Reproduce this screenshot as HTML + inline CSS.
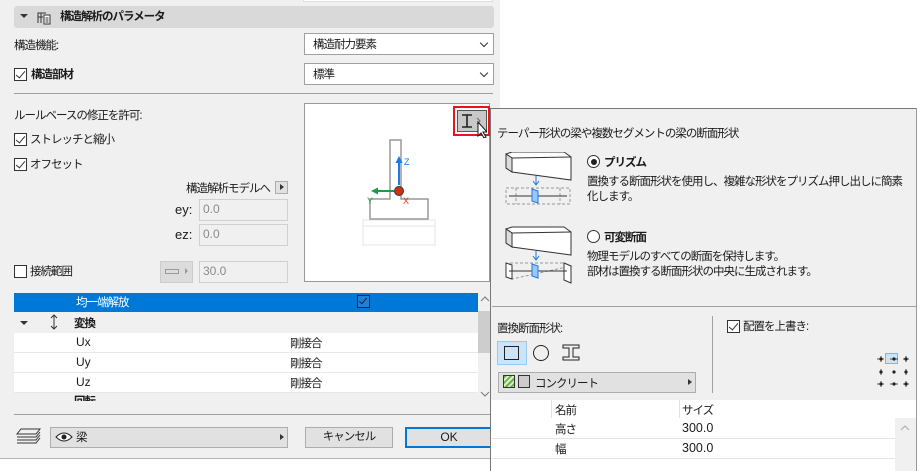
<!DOCTYPE html>
<html><head><meta charset="utf-8"><style>
*{box-sizing:border-box;margin:0;padding:0}
body{width:920px;height:471px;overflow:hidden;background:#fff;font-family:"Liberation Sans","Noto Sans CJK JP",sans-serif;font-size:11.5px;letter-spacing:-1px;color:#1a1a1a;position:relative}
.a{position:absolute;white-space:nowrap}
.l{letter-spacing:0}
.dlg{left:0;top:0;width:500px;height:459px;background:#f0f0f0;border-bottom:1px solid #b4b4b4}
.dd{background:#fff;border:1px solid #a0a0a0;padding:2px 0 0 8px}
.dd:after{content:"";position:absolute;right:6px;top:6px;width:5px;height:5px;border-right:1px solid #333;border-bottom:1px solid #333;transform:rotate(45deg)}
.cb{width:13px;height:13px;border:1px solid #333;background:#fff}
.cb.on:after{content:"";position:absolute;left:3px;top:0px;width:4px;height:8px;border-right:1.5px solid #333;border-bottom:1.5px solid #333;transform:rotate(40deg)}
.inp{background:#f0f0f0;border:1px solid #d0d0d0;color:#8a8a8a;padding:2px 0 0 3px;letter-spacing:0;font-size:12px}
.row{left:14px;width:464px;height:20px;background:#fff;border-bottom:1px solid #e8e8e8}
.btn{background:#e1e1e1;border:1px solid #adadad;text-align:center;line-height:18px}
</style></head><body>
<div class="a dlg"></div>
<div class="a" style="left:303px;top:0;width:190px;height:2px;background:#fff;border:1px solid #ddd;border-top:0"></div>
<div class="a" style="left:14px;top:6px;width:480px;height:22px;background:#d9d9d9;border-radius:3px"></div>
<div class="a" style="left:20px;top:14px;width:0;height:0;border-left:4px solid transparent;border-right:4px solid transparent;border-top:4px solid #333"></div>
<svg class="a" style="left:36px;top:10px" width="16" height="15"><path d="M2 13V3h8M2 7h5M5 3v10" stroke="#333" fill="none"/><rect x="8" y="5" width="6" height="9" fill="#fff" stroke="#333"/><path d="M9.5 8h3M9.5 10h3M9.5 12h3" stroke="#333"/></svg>
<div class="a" style="left:60px;top:8px;font-weight:bold">構造解析のパラメータ</div>
<div class="a" style="left:14px;top:37px">構造機能:</div>
<div class="a dd" style="left:304px;top:33px;width:190px;height:22px">構造耐力要素</div>
<div class="a cb on" style="left:14px;top:68px"></div>
<div class="a" style="left:31px;top:66px;font-weight:bold">構造部材</div>
<div class="a dd" style="left:304px;top:63px;width:190px;height:22px">標準</div>
<div class="a" style="left:14px;top:93px;width:479px;height:1px;background:#a0a0a0"></div>
<div class="a" style="left:14px;top:107px">ルールベースの修正を許可:</div>
<div class="a cb on" style="left:14px;top:133px"></div>
<div class="a" style="left:30px;top:131px">ストレッチと縮小</div>
<div class="a cb on" style="left:14px;top:158px"></div>
<div class="a" style="left:30px;top:156px">オフセット</div>
<div class="a" style="right:650px;top:180px">構造解析モデルへ</div>
<div class="a" style="left:275px;top:181px;width:13px;height:13px;background:#e1e1e1;border:1px solid #adadad"></div>
<div class="a" style="left:280px;top:184px;border-top:3.5px solid transparent;border-bottom:3.5px solid transparent;border-left:4px solid #333"></div>
<div class="a l" style="left:175px;top:202px;font-size:13px">ey:</div>
<div class="a inp" style="left:199px;top:199px;width:89px;height:22px">0.0</div>
<div class="a l" style="left:175px;top:227px;font-size:13px">ez:</div>
<div class="a inp" style="left:199px;top:224px;width:89px;height:22px">0.0</div>
<div class="a cb" style="left:14px;top:265px"></div>
<div class="a" style="left:30px;top:263px">接続範囲</div>
<div class="a" style="left:160px;top:261px;width:33px;height:22px;background:#dcdcdc;border:1px solid #ccc"></div>
<div class="a" style="left:165px;top:269px;width:14px;height:5px;border:1px solid #999"></div>
<div class="a" style="left:185px;top:268px;border-top:3px solid transparent;border-bottom:3px solid transparent;border-left:3px solid #999"></div>
<div class="a inp" style="left:199px;top:261px;width:89px;height:22px">30.0</div>
<div class="a" style="left:304px;top:103px;width:186px;height:179px;background:#fff;border:1px solid #999"></div>
<svg class="a" style="left:360px;top:138px" width="80" height="110">
<rect x="3" y="82" width="72" height="25" fill="none" stroke="#e4e4e4"/><line x1="3" y1="88" x2="75" y2="88" stroke="#e4e4e4"/>
<path d="M30 2H41V61H68V81H10V61H30Z" fill="none" stroke="#999" stroke-width="1.5"/>
<circle cx="39" cy="53" r="4.5" fill="#d03010" stroke="#333"/>
<path d="M39 47V22" stroke="#1e78e6" stroke-width="2"/><path d="M35.5 25L39 18L42.5 25Z" fill="#1e78e6"/>
<path d="M34 53H15" stroke="#16a040" stroke-width="2"/><path d="M18 49.5L11 53L18 56.5Z" fill="#16a040"/>
<text x="44" y="27" font-size="9" fill="#1e78e6" font-family="Liberation Sans">Z</text>
<text x="7" y="66" font-size="9" fill="#16a040" font-family="Liberation Sans">Y</text>
<text x="43" y="66" font-size="9" fill="#e03020" font-family="Liberation Sans">X</text></svg>
<div class="a" style="left:453px;top:106px;width:37px;height:30px;border:2px solid #e8141e"></div>
<div class="a" style="left:457px;top:110px;width:30px;height:22px;background:#c8c8c8;border:1px solid #555"></div>
<svg class="a" style="left:459px;top:112px" width="28" height="26"><path d="M3 3H13M3 15H13M8 3V15" stroke="#222" stroke-width="1.6" fill="none"/><path d="M18 6L21 9L18 12" stroke="#666" fill="none"/><path d="M19 10V24L22 21L25 26L27 25L24 20H28Z" fill="#fff" stroke="#111"/></svg>
<div class="a" style="left:14px;top:293px;width:464px;height:19px;background:#0078d7;color:#fff"><span class="a" style="left:62px;top:1px">均一端解放</span></div>
<div class="a" style="left:357px;top:295px;width:13px;height:13px;background:#1f80d8;border:1px solid #223"></div>
<div class="a" style="left:361px;top:296px;width:4px;height:8px;border-right:1.5px solid #223;border-bottom:1.5px solid #223;transform:rotate(40deg)"></div>
<div class="a" style="left:20px;top:321px;border-left:4px solid transparent;border-right:4px solid transparent;border-top:4px solid #333"></div>
<svg class="a" style="left:50px;top:314px" width="8" height="16"><path d="M4 1V15M1 4L4 1L7 4M1 12L4 15L7 12" stroke="#333" fill="none"/></svg>
<div class="a" style="left:74px;top:315px;font-weight:bold">変換</div>
<div class="a row" style="top:333px"><span class="a l" style="left:62px;top:2px;font-size:12px">Ux</span><span class="a" style="left:276px;top:2px">剛接合</span></div>
<div class="a row" style="top:353px"><span class="a l" style="left:62px;top:2px;font-size:12px">Uy</span><span class="a" style="left:276px;top:2px">剛接合</span></div>
<div class="a row" style="top:373px"><span class="a l" style="left:62px;top:2px;font-size:12px">Uz</span><span class="a" style="left:276px;top:2px">剛接合</span></div>
<div class="a" style="left:14px;top:393px;width:464px;height:8px;overflow:hidden"><span class="a" style="left:60px;top:0;font-weight:bold">回転</span></div>
<div class="a" style="left:478px;top:293px;width:14px;height:108px;background:#f0f0f0"></div>
<div class="a" style="left:478px;top:311px;width:13px;height:42px;background:#cdcdcd"></div>
<svg class="a" style="left:480px;top:296px" width="10" height="6"><path d="M1 5L5 1L9 5" stroke="#777" fill="none"/></svg>
<svg class="a" style="left:480px;top:391px" width="10" height="6"><path d="M1 1L5 5L9 1" stroke="#777" fill="none"/></svg>
<div class="a" style="left:14px;top:414px;width:476px;height:1px;background:#a0a0a0"></div>
<svg class="a" style="left:15px;top:427px" width="27" height="20"><path d="M6 2H25L21 7H2Z M2 10H21L25 5 M2 13H21L25 8 M2 16H21L25 11" fill="none" stroke="#333"/></svg>
<div class="a" style="left:50px;top:427px;width:238px;height:21px;background:#e1e1e1;border:1px solid #adadad"></div>
<svg class="a" style="left:55px;top:430px" width="18" height="14"><path d="M1 7Q9 -1 17 7Q9 15 1 7Z" fill="#fff" stroke="#222"/><circle cx="9" cy="7" r="2.5" fill="#222"/></svg>
<div class="a" style="left:76px;top:429px">梁</div>
<div class="a" style="left:280px;top:434px;border-top:3.5px solid transparent;border-bottom:3.5px solid transparent;border-left:4px solid #333"></div>
<div class="a btn" style="left:305px;top:427px;width:88px;height:21px">キャンセル</div>
<div class="a btn l" style="left:405px;top:427px;width:88px;height:21px;border:2px solid #0078d7;line-height:17px;font-size:12px">OK</div>
<div class="a" style="left:490px;top:108px;width:430px;height:363px;background:#f0f0f0;border-left:1px solid #777;border-top:1px solid #777"></div>
<div class="a" style="left:916px;top:108px;width:4px;height:363px;background:#fff;border-left:1px solid #999"></div>
<div class="a" style="left:497px;top:125px">テーパー形状の梁や複数セグメントの梁の断面形状</div>
<svg class="a" style="left:504px;top:152px" width="70" height="140">
<path d="M2 2L8 0H60L67 5V28L8 20L2 16Z" fill="#fff" stroke="#333"/><path d="M2 2L8 6L67 5M8 6V20" fill="none" stroke="#333"/><path d="M2 2L8 6V20L2 16Z" fill="#ddd" stroke="#333"/>
<path d="M32 24V32M29 29L32 33L35 29" stroke="#1e78e6" fill="none"/>
<rect x="2" y="36" width="64" height="16" fill="none" stroke="#999" stroke-dasharray="3,2"/><path d="M12 36V52M56 36V52" stroke="#999" stroke-dasharray="3,2"/>
<path d="M5 44H63" stroke="#333"/><path d="M28 37L34 39V51L28 49Z" fill="#9cc7f2" stroke="#1e78e6"/>
<path d="M2 77L8 75H60L67 80V103L8 95L2 91Z" fill="#fff" stroke="#333"/><path d="M2 77L8 81L67 80M8 81V95" fill="none" stroke="#333"/><path d="M2 77L8 81V95L2 91Z" fill="#ddd" stroke="#333"/>
<path d="M32 99V107M29 104L32 108L35 104" stroke="#1e78e6" fill="none"/>
<path d="M6 111L60 111L67 114L8 127Z" fill="none" stroke="#999" stroke-dasharray="3,2"/>
<path d="M2 111L8 113V127L2 125Z" fill="#fff" stroke="#333"/><path d="M60 111L67 114V131L60 128Z" fill="#fff" stroke="#333"/>
<path d="M5 119H63" stroke="#333"/><path d="M28 112L34 114V126L28 124Z" fill="#9cc7f2" stroke="#1e78e6"/></svg>
<div class="a" style="left:587px;top:155px;width:13px;height:13px;border-radius:50%;border:1px solid #333;background:#fff"></div>
<div class="a" style="left:590.5px;top:158.5px;width:6px;height:6px;border-radius:50%;background:#222"></div>
<div class="a" style="left:604px;top:154px;font-weight:bold">プリズム</div>
<div class="a" style="left:587px;top:175px;line-height:15px">置換する断面形状を使用し、複雑な形状をプリズム押し出しに簡素<br>化します。</div>
<div class="a" style="left:587px;top:230px;width:13px;height:13px;border-radius:50%;border:1px solid #333;background:#fff"></div>
<div class="a" style="left:604px;top:229px;font-weight:bold">可変断面</div>
<div class="a" style="left:587px;top:250px;line-height:15px">物理モデルのすべての断面を保持します。<br>部材は置換する断面形状の中央に生成されます。</div>
<div class="a" style="left:492px;top:306px;width:424px;height:1px;background:#a0a0a0"></div>
<div class="a" style="left:497px;top:320px">置換断面形状:</div>
<div class="a" style="left:712px;top:316px;width:1px;height:77px;background:#a0a0a0"></div>
<div class="a" style="left:497px;top:341px;width:30px;height:24px;background:#cce4f7;border:1px solid #99c9ef"></div>
<div class="a" style="left:504px;top:346px;width:15px;height:14px;border:1px solid #222"></div>
<div class="a" style="left:533px;top:345px;width:16px;height:16px;border:1px solid #222;border-radius:50%"></div>
<svg class="a" style="left:562px;top:344px" width="18" height="18"><path d="M1 1H17V4H11V13H17V16H1V13H7V4H1Z" fill="none" stroke="#222"/></svg>
<div class="a" style="left:498px;top:372px;width:198px;height:21px;background:#e1e1e1;border:1px solid #adadad"></div>
<div class="a" style="left:503px;top:375px;width:12px;height:13px;border:1px solid #333;background:repeating-linear-gradient(135deg,#6ab04c 0 2px,#d8f0c8 2px 4px)"></div>
<div class="a" style="left:518px;top:375px;width:12px;height:13px;border:1px solid #333;background:#ccc"></div>
<div class="a" style="left:535px;top:375px">コンクリート</div>
<div class="a" style="left:688px;top:379px;border-top:3.5px solid transparent;border-bottom:3.5px solid transparent;border-left:4px solid #333"></div>
<div class="a cb on" style="left:727px;top:320px"></div>
<div class="a" style="left:743px;top:318px">配置を上書き:</div>
<div class="a" style="left:885px;top:353px;width:13px;height:11px;background:#cce4f7;border:1px solid #7ab6e8"></div>
<svg class="a" style="left:876px;top:353px" width="34" height="36"><g fill="#222"><circle cx="5" cy="6" r="1.6"/><circle cx="18" cy="6" r="1.6"/><circle cx="30" cy="6" r="1.6"/><circle cx="5" cy="19" r="1.6"/><circle cx="18" cy="19" r="1.6"/><circle cx="30" cy="19" r="1.6"/><circle cx="5" cy="31" r="1.6"/><circle cx="18" cy="31" r="1.6"/><circle cx="30" cy="31" r="1.6"/></g><path d="M1 6H8M14 6H22M27 6H33M5 3V9M30 3V9M5 16V22M30 16V22M1 31H8M14 31H22M27 31H33M5 28V34M30 28V34" stroke="#222" stroke-width=".8"/></svg>
<div class="a" style="left:491px;top:400px;width:425px;height:71px;background:#fff"></div>
<div class="a" style="left:551px;top:400px;width:1px;height:18px;background:#e0e0e0"></div>
<div class="a" style="left:679px;top:400px;width:1px;height:18px;background:#e0e0e0"></div>
<div class="a" style="left:555px;top:402px">名前</div>
<div class="a" style="left:682px;top:402px">サイズ</div>
<div class="a" style="left:555px;top:421px">高さ</div>
<div class="a l" style="left:682px;top:421px;font-size:12.5px">300.0</div>
<div class="a" style="left:492px;top:438px;width:403px;height:1px;background:#e4e4e4"></div>
<div class="a" style="left:555px;top:441px">幅</div>
<div class="a l" style="left:682px;top:441px;font-size:12.5px">300.0</div>
<div class="a" style="left:492px;top:458px;width:403px;height:1px;background:#e4e4e4"></div>
<div class="a" style="left:895px;top:418px;width:21px;height:53px;background:#f0f0f0"></div>
<svg class="a" style="left:900px;top:425px" width="10" height="6"><path d="M1 5L5 1L9 5" stroke="#aaa" fill="none"/></svg>
</body></html>
